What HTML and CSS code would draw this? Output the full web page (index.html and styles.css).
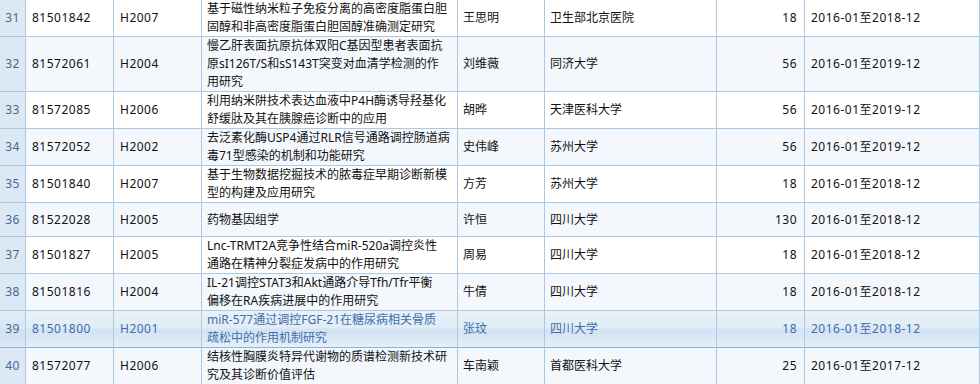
FILE: index.html
```html
<!DOCTYPE html>
<html lang="zh">
<head>
<meta charset="utf-8">
<title>项目列表</title>
<link rel="stylesheet" href="styles.css">
</head>
<body>
<div class="grid">
  <div class="row">
    <div class="c num">31</div><div class="c code">81501842</div><div class="c code">H2007</div>
    <div class="c title">基于磁性纳米粒子免疫分离的高密度脂蛋白胆<br>固醇和非高密度脂蛋白胆固醇准确测定研究</div>
    <div class="c">王思明</div><div class="c">卫生部北京医院</div><div class="c amt">18</div><div class="c code">2016-01至2018-12</div>
  </div>
  <div class="row alt">
    <div class="c num">32</div><div class="c code">81572061</div><div class="c code">H2004</div>
    <div class="c title">慢乙肝表面抗原抗体双阳C基因型患者表面抗<br>原sI126T/S和sS143T突变对血清学检测的作<br>用研究</div>
    <div class="c">刘维薇</div><div class="c">同济大学</div><div class="c amt">56</div><div class="c code">2016-01至2019-12</div>
  </div>
  <div class="row">
    <div class="c num">33</div><div class="c code">81572085</div><div class="c code">H2006</div>
    <div class="c title">利用纳米阱技术表达血液中P4H酶诱导羟基化<br>舒缓肽及其在胰腺癌诊断中的应用</div>
    <div class="c">胡晔</div><div class="c">天津医科大学</div><div class="c amt">56</div><div class="c code">2016-01至2019-12</div>
  </div>
  <div class="row alt">
    <div class="c num">34</div><div class="c code">81572052</div><div class="c code">H2002</div>
    <div class="c title">去泛素化酶USP4通过RLR信号通路调控肠道病<br>毒71型感染的机制和功能研究</div>
    <div class="c">史伟峰</div><div class="c">苏州大学</div><div class="c amt">56</div><div class="c code">2016-01至2019-12</div>
  </div>
  <div class="row">
    <div class="c num">35</div><div class="c code">81501840</div><div class="c code">H2007</div>
    <div class="c title">基于生物数据挖掘技术的脓毒症早期诊断新模<br>型的构建及应用研究</div>
    <div class="c">方芳</div><div class="c">苏州大学</div><div class="c amt">18</div><div class="c code">2016-01至2018-12</div>
  </div>
  <div class="row alt single">
    <div class="c num">36</div><div class="c code">81522028</div><div class="c code">H2005</div>
    <div class="c title">药物基因组学</div>
    <div class="c">许恒</div><div class="c">四川大学</div><div class="c amt">130</div><div class="c code">2016-01至2018-12</div>
  </div>
  <div class="row">
    <div class="c num">37</div><div class="c code">81501827</div><div class="c code">H2005</div>
    <div class="c title">Lnc-TRMT2A竞争性结合miR-520a调控炎性<br>通路在精神分裂症发病中的作用研究</div>
    <div class="c">周易</div><div class="c">四川大学</div><div class="c amt">18</div><div class="c code">2016-01至2018-12</div>
  </div>
  <div class="row alt">
    <div class="c num">38</div><div class="c code">81501816</div><div class="c code">H2004</div>
    <div class="c title">IL-21调控STAT3和Akt通路介导Tfh/Tfr平衡<br>偏移在RA疾病进展中的作用研究</div>
    <div class="c">牛倩</div><div class="c">四川大学</div><div class="c amt">18</div><div class="c code">2016-01至2018-12</div>
  </div>
  <div class="row over">
    <div class="c num">39</div><div class="c code">81501800</div><div class="c code">H2001</div>
    <div class="c title">miR-577通过调控FGF-21在糖尿病相关骨质<br>疏松中的作用机制研究</div>
    <div class="c">张玟</div><div class="c">四川大学</div><div class="c amt">18</div><div class="c code">2016-01至2018-12</div>
  </div>
  <div class="row alt">
    <div class="c num">40</div><div class="c code">81572077</div><div class="c code">H2006</div>
    <div class="c title">结核性胸膜炎特异代谢物的质谱检测新技术研<br>究及其诊断价值评估</div>
    <div class="c">车南颖</div><div class="c">首都医科大学</div><div class="c amt">25</div><div class="c code">2016-01至2017-12</div>
  </div>
</div>
</body>
</html>
```

FILE: styles.css
```css
html, body {
  margin: 0;
  padding: 0;
  background: #ffffff;
}

body {
  font-family: "Noto Sans", "Noto Sans CJK SC", sans-serif;
  font-size: 12px;
  color: #111111;
}

.grid {
  width: 980px;
  display: flex;
  flex-direction: column;
}

.row {
  display: grid;
  grid-template-columns: 26px 88px 88px 256px 87px 172px 88px 175px;
  min-height: 37px;
  background: #ffffff;
}

.row.single {
  min-height: 34px;
}

.row.alt {
  background: #f4f8fd;
}

.row.over {
  background: linear-gradient(to bottom, #e9f1f9 0%, #e1ecf7 45%, #d3e3f4 50%, #dbe8f5 75%, #e7f0f9 100%);
  color: #3f6ea6;
}

.c {
  box-sizing: border-box;
  border-right: 1px solid #a9c9e4;
  border-bottom: 1px solid #a9c9e4;
  padding: 0 5px;
  line-height: 18px;
  display: flex;
  align-items: center;
  white-space: nowrap;
}

.row.over .c {
  border-bottom-color: #82b5e6;
}

.c.title {
  display: block;
  align-self: stretch;
  display: flex;
  align-items: center;
  word-spacing: 0;
}

.c.code {
  letter-spacing: 0.5px;
  padding-left: 6px;
}

.c.amt {
  justify-content: flex-end;
  letter-spacing: 0.5px;
  padding-right: 7px;
}

.c.num {
  justify-content: center;
  padding: 0;
  background: #dce8f4;
  color: #45698f;
  letter-spacing: 0.5px;
}

.row.over .c.num {
  background: linear-gradient(to bottom, #e2ecf6 0%, #d8e5f3 50%, #cfe0f1 52%, #dce8f5 100%);
}
```
